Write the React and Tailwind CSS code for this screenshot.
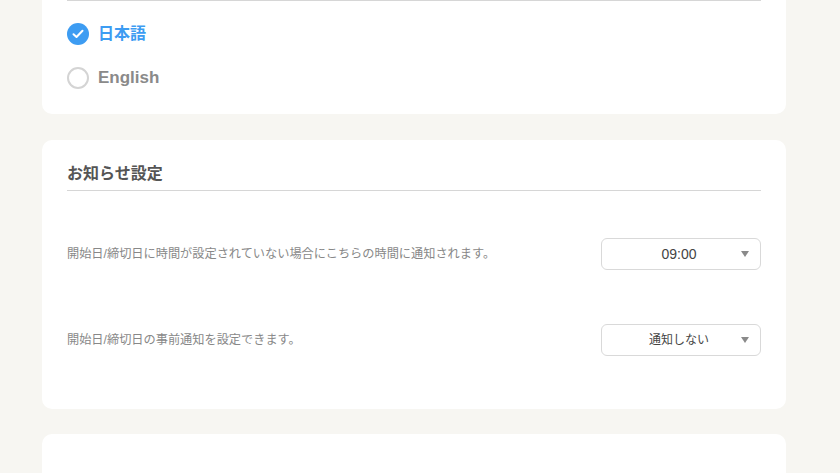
import React from "react";

const font = { fontFamily: '"Liberation Sans", "Noto Sans CJK JP", sans-serif' };

function Radio({ checked, label }) {
  return (
    <div className="flex items-center h-[44px]">
      {checked ? (
        <span className="w-[22px] h-[22px] rounded-full bg-[#3d9cf2] flex items-center justify-center">
          <svg width="12" height="10" viewBox="0 0 12 10" fill="none">
            <path d="M1.5 5.2 4.5 8 10.5 1.8" stroke="#fff" strokeWidth="2" strokeLinecap="round" strokeLinejoin="round" />
          </svg>
        </span>
      ) : (
        <span className="w-[22px] h-[22px] rounded-full border-2 border-[#d4d4d4] bg-white" />
      )}
      <span
        className={
          checked
            ? "ml-[9px] text-[16px] font-bold text-[#3d9cf2]"
            : "ml-[9px] text-[17px] font-bold text-[#8a8a8a]"
        }
      >
        {label}
      </span>
    </div>
  );
}

function Select({ value, jp }) {
  return (
    <div className="relative w-[160px] h-[32px] rounded-[6px] border border-[#d9d9d9] bg-white flex items-center justify-center pr-[4px]">
      <span className={jp ? "text-[12px] text-[#444]" : "text-[14px] text-[#444]"}>{value}</span>
      <svg className="absolute right-[11px] top-[12px]" width="8" height="6" viewBox="0 0 8 6">
        <path d="M0 0H8L4 6Z" fill="#8a8a8a" />
      </svg>
    </div>
  );
}

function Row({ label, children }) {
  return (
    <div className="h-[86px] flex items-center justify-between">
      <span className="text-[12.2px] text-[#888]">{label}</span>
      {children}
    </div>
  );
}

export default function App() {
  return (
    <div className="h-screen bg-[#f7f6f2] pl-[42px] pr-[54px] overflow-hidden" style={font}>
      <div className="bg-white rounded-[10px] -mt-[20px] pt-[20px] px-[25px] pb-[14px]">
        <div className="border-t border-[#d6d6d6]" />
        <div className="pt-[11px]">
          <Radio checked label="日本語" />
          <Radio label="English" />
        </div>
      </div>

      <div className="bg-white rounded-[10px] mt-[26px] px-[25px] pt-[22px] pb-[26px]">
        <h2 className="text-[16px] font-bold text-[#555] leading-[24px] pb-[4px] border-b border-[#d6d6d6]">
          お知らせ設定
        </h2>
        <div className="mt-[20px]">
          <Row label="開始日/締切日に時間が設定されていない場合にこちらの時間に通知されます。">
            <Select value="09:00" />
          </Row>
          <Row label="開始日/締切日の事前通知を設定できます。">
            <Select value="通知しない" jp />
          </Row>
        </div>
      </div>

      <div className="bg-white rounded-[10px] mt-[25px] h-[60px]" />
    </div>
  );
}
